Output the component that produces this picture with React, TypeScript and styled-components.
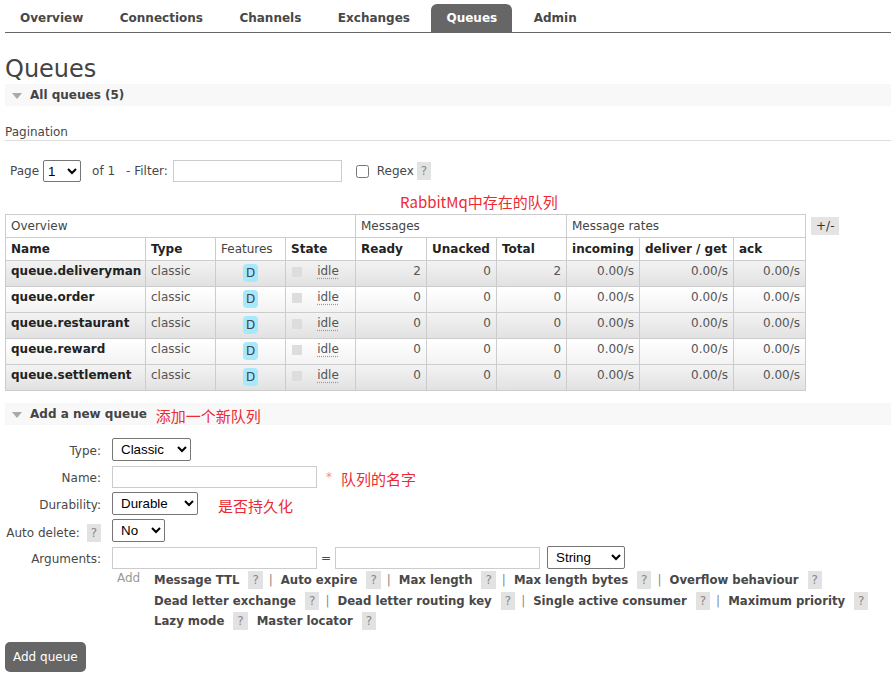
import React from "react";
import { styled, createGlobalStyle } from "styled-components";

const GlobalStyle = createGlobalStyle`
  html, body {
    margin: 0;
    padding: 0;
    background: #fff;
  }
  body {
    font: 12px "DejaVu Sans", Verdana, sans-serif;
    color: #484848;
  }
`;

const tabs = ["Overview", "Connections", "Channels", "Exchanges", "Queues", "Admin"];

const queues = [
  { name: "queue.deliveryman", ready: 2, unacked: 0, total: 2 },
  { name: "queue.order", ready: 0, unacked: 0, total: 0 },
  { name: "queue.restaurant", ready: 0, unacked: 0, total: 0 },
  { name: "queue.reward", ready: 0, unacked: 0, total: 0 },
  { name: "queue.settlement", ready: 0, unacked: 0, total: 0 },
];

const argRows = [
  ["Message TTL", "Auto expire", "Max length", "Max length bytes", "Overflow behaviour"],
  ["Dead letter exchange", "Dead letter routing key", "Single active consumer", "Maximum priority"],
];

const App = () => {
  return (
    <Page>
      <GlobalStyle />
      <Menu>
        {tabs.map((t) => (
          <Tab key={t} $active={t === "Queues"}>{t}</Tab>
        ))}
      </Menu>

      <Title>Queues</Title>
      <SectionBar>
        <Arrow />
        <span>All queues (5)</span>
      </SectionBar>

      <Pagination>Pagination</Pagination>
      <FilterRow>
        <span>Page</span>
        <PageSelect defaultValue="1">
          <option>1</option>
        </PageSelect>
        <OfText>of 1</OfText>
        <span>- Filter:</span>
        <FilterInput />
        <Check type="checkbox" />
        <span>Regex</span>
        <Help>?</Help>
      </FilterRow>

      <NoteRow>
        <Note>RabbitMq中存在的队列</Note>
      </NoteRow>

      <TableRow>
        <List>
          <colgroup>
            <col style={{ width: 140 }} />
            <col style={{ width: 70 }} />
            <col style={{ width: 70 }} />
            <col style={{ width: 70 }} />
            <col style={{ width: 71 }} />
            <col style={{ width: 70 }} />
            <col style={{ width: 70 }} />
            <col style={{ width: 73 }} />
            <col style={{ width: 94 }} />
            <col style={{ width: 72 }} />
          </colgroup>
          <thead>
            <tr>
              <GroupTh colSpan={4}>Overview</GroupTh>
              <GroupTh colSpan={3}>Messages</GroupTh>
              <GroupTh colSpan={3}>Message rates</GroupTh>
            </tr>
            <tr>
              <Th>Name</Th>
              <Th>Type</Th>
              <Th $plain>Features</Th>
              <Th>State</Th>
              <Th>Ready</Th>
              <Th>Unacked</Th>
              <Th>Total</Th>
              <Th>incoming</Th>
              <Th>deliver / get</Th>
              <Th>ack</Th>
            </tr>
          </thead>
          <tbody>
            {queues.map((q, i) => (
              <Tr key={q.name} $alt={i % 2 === 0}>
                <NameTd>{q.name}</NameTd>
                <Td>classic</Td>
                <Td $center>
                  <Badge>D</Badge>
                </Td>
                <Td>
                  <StateCell>
                    <StateKey />
                    <Idle>idle</Idle>
                  </StateCell>
                </Td>
                <Td $right>{q.ready}</Td>
                <Td $right>{q.unacked}</Td>
                <Td $right>{q.total}</Td>
                <Td $right>0.00/s</Td>
                <Td $right>0.00/s</Td>
                <Td $right>0.00/s</Td>
              </Tr>
            ))}
          </tbody>
        </List>
        <Toggle>+/-</Toggle>
      </TableRow>

      <SectionBar $gap>
        <Arrow />
        <span>Add a new queue</span>
        <InlineNote $top={4}>添加一个新队列</InlineNote>
      </SectionBar>

      <Form>
        <Label>Type:</Label>
        <Field>
          <Select $w={79} defaultValue="Classic">
            <option>Classic</option>
          </Select>
        </Field>

        <Label>Name:</Label>
        <Field>
          <TextInput $w={205} />
          <Mand>*</Mand>
          <InlineNote>队列的名字</InlineNote>
        </Field>

        <Label>Durability:</Label>
        <Field>
          <Select $w={86} defaultValue="Durable">
            <option>Durable</option>
          </Select>
          <InlineNote $left={20}>是否持久化</InlineNote>
        </Field>

        <Label>
          Auto delete: <Help>?</Help>
        </Label>
        <Field>
          <Select $w={53} defaultValue="No">
            <option>No</option>
          </Select>
        </Field>

        <Label>Arguments:</Label>
        <Field>
          <TextInput $w={205} />
          <Equals>=</Equals>
          <TextInput $w={205} />
          <Select $w={78} $left={7} defaultValue="String">
            <option>String</option>
          </Select>
        </Field>

        <span />
        <AddRow>
          <AddText>Add</AddText>
          <ArgLinks>
            {argRows.map((row, r) => (
              <ArgLine key={r}>
                {row.map((a, i) => (
                  <React.Fragment key={a}>
                    <ArgLink>{a}</ArgLink>
                    <Help $ml={9}>?</Help>
                    {i < row.length - 1 && <Sep>|</Sep>}
                  </React.Fragment>
                ))}
              </ArgLine>
            ))}
            <ArgLine>
              <ArgLink>Lazy mode</ArgLink>
              <Help $ml={9}>?</Help>
              <ArgLink $ml={9}>Master locator</ArgLink>
              <Help $ml={9}>?</Help>
            </ArgLine>
          </ArgLinks>
        </AddRow>
      </Form>

      <Submit>Add queue</Submit>
    </Page>
  );
};

const Page = styled.div`
  padding: 0 0 10px 5px;
`;

const Menu = styled.div`
  display: flex;
  gap: 6.5px;
  padding-top: 4px;
  border-bottom: 1px solid #666;
`;

const Tab = styled.div<{ $active?: boolean }>`
  padding: 0 15px;
  line-height: 28px;
  font-weight: bold;
  color: ${(p) => (p.$active ? "#fff" : "#484848")};
  background: ${(p) => (p.$active ? "#666" : "transparent")};
  border-radius: 6px 6px 0 0;
`;

const Title = styled.h1`
  margin: 21px 0 0;
  font-size: 24px;
  line-height: 30px;
  font-weight: normal;
  color: #444;
`;

const SectionBar = styled.div<{ $gap?: boolean }>`
  display: flex;
  align-items: center;
  height: 22px;
  margin-top: ${(p) => (p.$gap ? "12px" : "0")};
  background: #f8f8f8;
  font-weight: bold;
  color: #444;
`;

const Arrow = styled.span`
  width: 0;
  height: 0;
  margin: 1px 8px 0 7px;
  border-left: 5px solid transparent;
  border-right: 5px solid transparent;
  border-top: 6px solid #aaa;
`;

const Pagination = styled.div`
  margin-top: 18px;
  line-height: 16px;
  border-bottom: 1px solid #ddd;
  color: #484848;
`;

const FilterRow = styled.div`
  display: flex;
  align-items: center;
  height: 22px;
  margin-top: 19px;
  padding-left: 5px;
`;

const PageSelect = styled.select`
  width: 38px;
  height: 22px;
  margin-left: 4px;
  border: 1px solid #767676;
  border-radius: 2px;
  background: #fff;
  font: 13.33px "Liberation Sans", Arial, sans-serif;
  color: #000;
`;

const OfText = styled.span`
  margin: 0 11px 0 11px;
`;

const FilterInput = styled.input`
  box-sizing: border-box;
  width: 169px;
  height: 22px;
  margin-left: 5px;
  border: 1px solid #ccc;
  border-radius: 0;
`;

const Check = styled.input`
  width: 13px;
  height: 13px;
  margin: 0 8px 0 14px;
`;

const Help = styled.span<{ $ml?: number }>`
  display: inline-block;
  padding: 0 4px;
  margin-left: ${(p) => p.$ml ?? 3}px;
  line-height: 18px;
  background: #e2e2e2;
  color: #888;
  font-weight: normal;
  font-size: 12px;
`;

const NoteRow = styled.div`
  height: 32px;
  padding-left: 395px;
  box-sizing: border-box;
  padding-top: 10px;
`;

const Note = styled.span`
  display: block;
  font: 15px "Noto Sans CJK SC", sans-serif;
  line-height: 20px;
  color: #ec2a32;
`;

const InlineNote = styled.span<{ $left?: number; $top?: number }>`
  margin-left: ${(p) => p.$left ?? 9}px;
  padding-top: ${(p) => p.$top ?? 4}px;
  font: 15px "Noto Sans CJK SC", sans-serif;
  line-height: 18px;
  font-weight: normal;
  color: #ec2a32;
`;

const TableRow = styled.div`
  display: flex;
  align-items: flex-start;
  gap: 5px;
`;

const List = styled.table`
  width: 801px;
  table-layout: fixed;
  border-collapse: collapse;
  border: 1px solid #ccc;
`;

const GroupTh = styled.th`
  height: 22px;
  padding: 0 5px;
  text-align: left;
  font-weight: normal;
  color: #444;
  border: 1px solid #ccc;
`;

const Th = styled.th<{ $plain?: boolean }>`
  height: 22px;
  padding: 0 5px;
  text-align: left;
  font-weight: ${(p) => (p.$plain ? "normal" : "bold")};
  color: ${(p) => (p.$plain ? "#444" : "#222")};
  border: 1px solid #ccc;
  white-space: nowrap;
`;

const Tr = styled.tr<{ $alt?: boolean }>`
  height: 26px;
  background: ${(p) =>
    p.$alt
      ? "linear-gradient(#f3f3f3, #e1e1e1)"
      : "linear-gradient(#ffffff, #f2f2f2)"};
`;

const Td = styled.td<{ $right?: boolean; $center?: boolean }>`
  padding: 2px 5px 0;
  line-height: 16px;
  vertical-align: top;
  border: 1px solid #ccc;
  color: #555;
  text-align: ${(p) => (p.$right ? "right" : p.$center ? "center" : "left")};
  white-space: nowrap;
`;

const NameTd = styled(Td)`
  font-weight: bold;
  color: #222;
`;

const Badge = styled.span`
  display: inline-block;
  margin-top: 1px;
  padding: 0 3px;
  height: 18px;
  line-height: 19px;
  border-radius: 4px;
  background: #a6e9fd;
  color: #444;
`;

const StateCell = styled.div`
  display: flex;
  align-items: flex-start;
  padding-left: 1px;
`;

const StateKey = styled.span`
  width: 10px;
  height: 10px;
  margin-top: 4px;
  background: #ddd;
`;

const Idle = styled.span`
  flex: 1;
  padding-left: 4px;
  text-align: center;
  text-decoration: underline dotted #999;
  text-underline-offset: 3px;
`;

const Toggle = styled.div`
  margin-top: 3px;
  padding: 0 5px;
  line-height: 18px;
  background: #e4e4e4;
  color: #333;
`;

const Form = styled.div`
  display: grid;
  grid-template-columns: 96px auto;
  column-gap: 11px;
  row-gap: 4px;
  margin-top: 13px;
  align-items: start;
`;

const Label = styled.div`
  padding-top: 5px;
  line-height: 16px;
  text-align: right;
  white-space: nowrap;
  color: #484848;
`;

const Field = styled.div`
  display: flex;
  align-items: center;
  height: 23px;
`;

const Select = styled.select<{ $w: number; $left?: number }>`
  width: ${(p) => p.$w}px;
  height: 23px;
  margin-left: ${(p) => p.$left ?? 0}px;
  padding: 0 4px;
  border: 1px solid #767676;
  border-radius: 2px;
  background: #fff;
  font: 13.33px "Liberation Sans", Arial, sans-serif;
  color: #000;
`;

const TextInput = styled.input<{ $w: number }>`
  box-sizing: border-box;
  width: ${(p) => p.$w}px;
  height: 22px;
  border: 1px solid #ccc;
  border-radius: 0;
`;

const Mand = styled.span`
  margin-left: 9px;
  color: #f88;
`;

const Equals = styled.span`
  margin: 0 4px 0 4px;
`;

const AddRow = styled.div`
  display: flex;
  margin-top: -3px;
`;

const AddText = styled.span`
  width: 37px;
  padding-left: 5px;
  line-height: 16px;
  color: #999;
`;

const ArgLinks = styled.div`
  display: flex;
  flex-direction: column;
`;

const ArgLine = styled.div`
  display: flex;
  align-items: center;
  height: 20.5px;
  white-space: nowrap;
`;

const ArgLink = styled.span<{ $ml?: number }>`
  margin-left: ${(p) => p.$ml ?? 0}px;
  font-weight: bold;
  font-size: 11.7px;
  color: #484848;
`;

const Sep = styled.span`
  margin: 0 8px 0 6px;
  color: #888;
`;

const Submit = styled.button`
  display: block;
  margin-top: 10px;
  height: 30px;
  padding: 0 8px;
  border: none;
  border-radius: 5px;
  background: #666;
  color: #fff;
  font: 12px "DejaVu Sans", Verdana, sans-serif;
`;

export default App;
